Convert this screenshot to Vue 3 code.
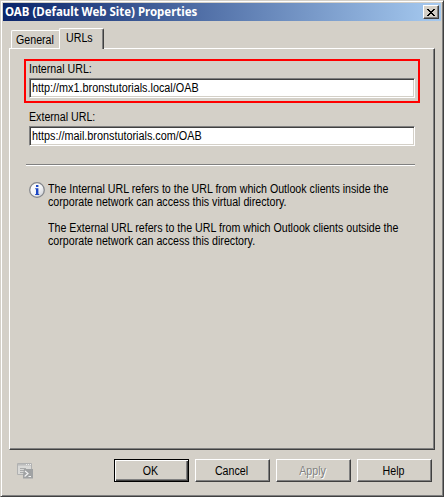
<script setup>
import { ref } from 'vue'

const internalUrl = ref('http://mx1.bronstutorials.local/OAB')
const externalUrl = ref('https://mail.bronstutorials.com/OAB')
</script>

<template>
  <div class="window">
    <header class="titlebar">
      <span class="title">OAB (Default Web Site) Properties</span>
      <button class="close" aria-label="Close">
        <svg width="8" height="7" viewBox="0 0 8 7" shape-rendering="crispEdges">
          <path fill="#000" d="M0 0h2v1H0zM6 0h2v1H6zM1 1h2v1H1zM5 1h2v1H5zM2 2h4v1H2zM3 3h2v1H3zM2 4h4v1H2zM1 5h2v1H1zM5 5h2v1H5zM0 6h2v1H0zM6 6h2v1H6z" />
        </svg>
      </button>
    </header>

    <nav class="tabs">
      <div class="tab general"><span class="t">General</span></div>
      <div class="tab active"><span class="t">URLs</span></div>
    </nav>

    <main class="panel">
      <section class="field highlighted">
        <label><span class="t">Internal URL:</span></label>
        <div class="input"><span class="t">{{ internalUrl }}</span></div>
      </section>
      <section class="field">
        <label><span class="t">External URL:</span></label>
        <div class="input"><span class="t">{{ externalUrl }}</span></div>
      </section>
      <div class="divider"></div>
      <section class="info">
        <svg class="info-icon" width="16" height="16" viewBox="0 0 16 16">
          <defs>
            <linearGradient id="ball" x1="0" y1="0" x2="1" y2="1">
              <stop offset="0" stop-color="#fff" />
              <stop offset=".55" stop-color="#f2f3f6" />
              <stop offset="1" stop-color="#c3c6cc" />
            </linearGradient>
          </defs>
          <circle cx="8" cy="8" r="7.3" fill="url(#ball)" stroke="#85878c" stroke-width="1.3" />
          <path fill="#1c47c4" d="M7 3h2.4v2H7zM6.2 6.2h3.2v5.8h.8v1H6.2v-1H7V7.2h-.8z" />
        </svg>
        <div class="copy">
          <p><span class="t">The Internal URL refers to the URL from which Outlook clients inside the</span><span class="t">corporate network can access this virtual directory.</span></p>
          <p><span class="t">The External URL refers to the URL from which Outlook clients outside the</span><span class="t">corporate network can access this directory.</span></p>
        </div>
      </section>
    </main>

    <footer class="footer">
      <svg class="shell-icon" width="16" height="16" viewBox="0 0 16 16">
        <path d="M.5.5h14v11H.5z" fill="#d9d9d7" stroke="#b0b1b1" />
        <path d="M1 1h13v1.6H1z" fill="#bcbdbd" />
        <path d="M9 1.5h1M11 1.5h1M13 1.5h1" stroke="#eee" />
        <path d="M3 5.5h6M3 7.5h4M3 9.5h4" stroke="#a9aaaa" />
        <path d="M7 6h9v9.5H6V12z" fill="#a0a2a3" />
        <path d="M8 8l3 2.5L7.6 13.5M11.5 13.5H14" fill="none" stroke="#f3f3f3" stroke-width="1.2" />
      </svg>
      <button class="btn default"><span class="t">OK</span></button>
      <button class="btn"><span class="t">Cancel</span></button>
      <button class="btn" disabled><span class="t">Apply</span></button>
      <button class="btn"><span class="t">Help</span></button>
    </footer>
  </div>
</template>

<style>
body { margin: 0; background: #d4d0c8; }
</style>

<style scoped>
* { box-sizing: border-box; }
.window {
  width: 444px; height: 497px; padding: 2px 1px 0 2px;
  display: flex; flex-direction: column;
  background: #d4d0c8; color: #000;
  border: 1px solid; border-color: #d4d0c8 #404040 #404040 #d4d0c8;
  box-shadow: inset 1px 1px #fff, inset -1px -1px #808080;
  font-family: "Liberation Sans", sans-serif; font-size: 12px; line-height: 13px;
  white-space: nowrap;
}
/* condensed dialog lettering */
.t { display: block; transform: scaleX(0.888); transform-origin: 0 0; }
.titlebar {
  width: 438px; height: 18px; flex: none; padding: 0 2px;
  display: flex; align-items: center; justify-content: space-between;
  background: linear-gradient(90deg, #0a246a, #a6caf0);
}
.title { color: #fff; font: bold 11.5px/16px "Noto Sans", sans-serif; letter-spacing: -0.02px; }
.close {
  width: 16px; height: 14px; padding: 0; display: flex; align-items: center; justify-content: center;
  background: #d4d0c8; border: 1px solid; border-color: #fff #404040 #404040 #fff;
  box-shadow: inset -1px -1px #808080;
}
.tabs { display: flex; align-items: flex-end; height: 27px; padding-left: 8px; flex: none; }
.tab {
  height: 18px; border: solid #fff; border-width: 1px 0 0 1px; border-radius: 2px 0 0;
}
.general { width: 48px; padding: 3px 0 0 4px; }
.active {
  position: relative; width: 45px; height: 21px; margin-bottom: -1px; padding: 3px 0 0 6px;
  background: #d4d0c8; border-right: 1px solid #404040; border-radius: 2px 2px 0 0;
  box-shadow: inset -1px 0 #808080;
}
.panel {
  width: 426px; height: 402px; margin-left: 6px; padding: 10px 14px; flex: none;
  border: 1px solid; border-color: #fff #404040 #404040 #fff;
  box-shadow: inset -1px -1px #808080;
}
.field { width: 396px; height: 44px; padding: 2px 3px 0; border: 2px solid transparent; }
.field + .field { margin-top: 4px; }
.highlighted { border-color: #f00; }
.field label { display: block; height: 15px; }
.input {
  width: 386px; height: 20px; padding: 3px 0 0 1.5px;
  background: #fff; border: 1px solid; border-color: #808080 #fff #fff #808080;
  box-shadow: inset 1px 1px #404040, inset -1px -1px #d4d0c8;
}
.input .t { transform: scaleX(0.902); }
.divider { width: 389px; height: 2px; margin: 13px 0 0 2px; border-top: 1px solid #808080; border-bottom: 1px solid #fff; }
.info { display: flex; padding: 16px 0 0 5px; }
.info-icon { flex: none; }
.copy { padding: 1px 0 0 3px; }
.copy p { margin: 0 0 13px; }
.footer { display: flex; gap: 6px; padding: 9px 0 0 14px; align-items: flex-start; }
.shell-icon { margin: 4px 75px 0 0; flex: none; }
.btn {
  width: 75px; height: 23px; padding: 1px 2px 0 0; flex: none;
  background: #d4d0c8; border: 1px solid; border-color: #fff #404040 #404040 #fff;
  box-shadow: inset -1px -1px #808080; color: #000;
  font: 12px/13px "Liberation Sans", sans-serif;
}
.btn .t { transform-origin: 50% 0; }
.btn.default {
  border-color: #000;
  box-shadow: inset 1px 1px #fff, inset -1px -1px #404040, inset -2px -2px #808080;
}
.btn:disabled { color: #808080; text-shadow: 1px 1px #fff; }
</style>
